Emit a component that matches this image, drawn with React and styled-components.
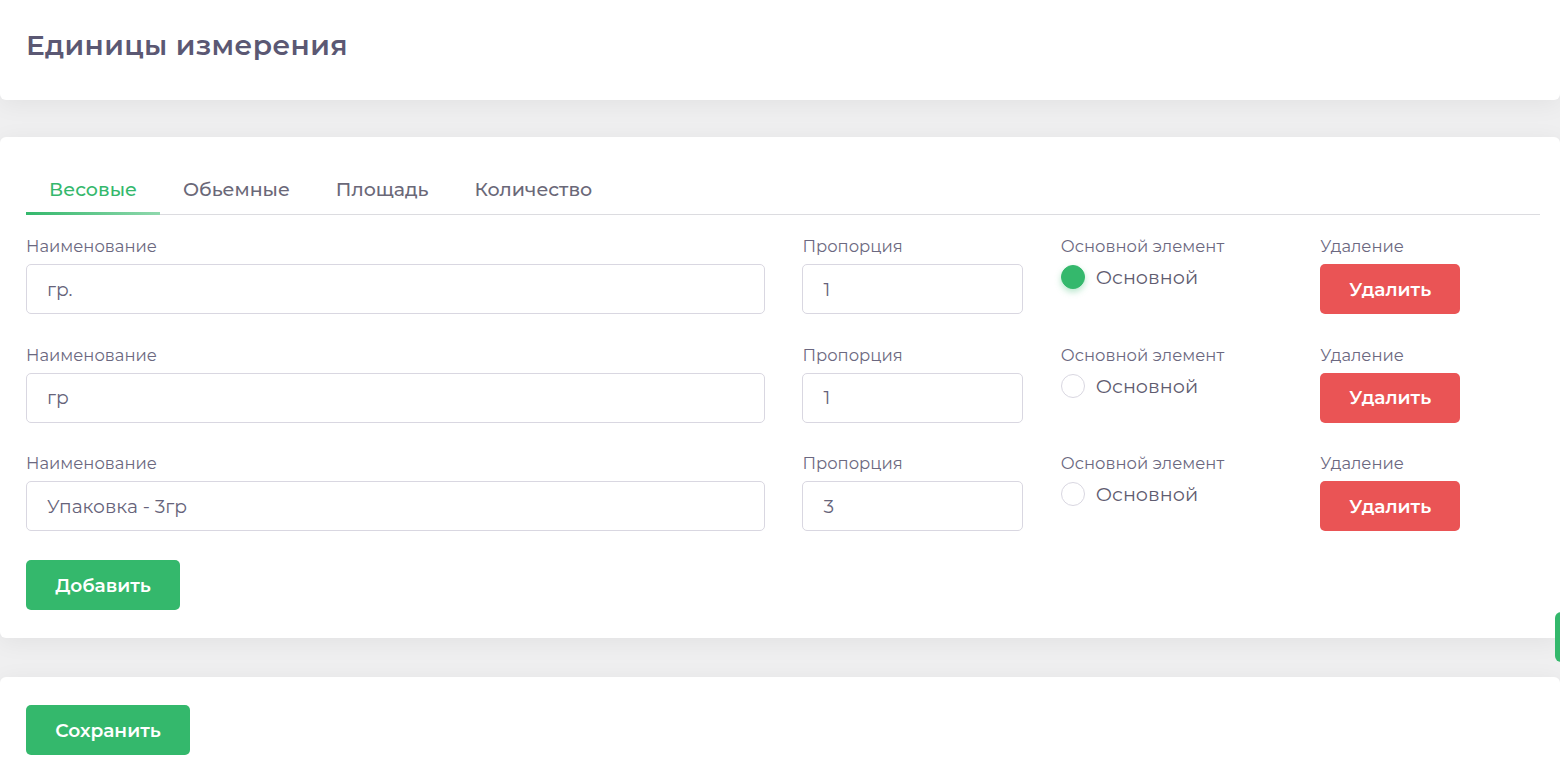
import React, { useState } from 'react';
import styled, { createGlobalStyle } from 'styled-components';

const GlobalStyle = createGlobalStyle`
  html, body {
    margin: 0;
    padding: 0;
    background: #efeff0;
    font-family: Montserrat, "Noto Sans", "Open Sans", sans-serif;
    overflow: hidden;
  }
  * { box-sizing: border-box; }
`;

const Page = styled.div`
  display: flex;
  flex-direction: column;
  gap: 37px;
  min-height: 772px;
`;

const Card = styled.section`
  background: #fff;
  border-radius: 6px;
  box-shadow: 0 4px 24px rgba(0, 0, 0, 0.06);
  padding: ${p => p.$pad || '0 20px 0 26px'};
`;

const Header = styled(Card)`
  height: 100px;
  border-radius: 0 0 6px 6px;
  display: flex;
  align-items: center;
  padding-bottom: 10px;
`;

const Title = styled.h1`
  margin: 0;
  font-size: 28px;
  font-weight: 600;
  color: #5b5873;
  letter-spacing: 0.35px;
`;

const Tabs = styled.div`
  display: flex;
  border-bottom: 1px solid #dcdce0;
  margin-top: 40px;
`;

const Tab = styled.button`
  position: relative;
  background: none;
  border: none;
  font-family: inherit;
  font-size: 19px;
  font-weight: 500;
  line-height: 24px;
  padding: 1px 23px 12px;
  color: ${p => (p.$active ? '#34b86c' : '#6a6878')};
  cursor: pointer;

  &::after {
    content: '';
    position: absolute;
    left: 0;
    right: 0;
    bottom: -1px;
    height: 3px;
    background: ${p => (p.$active ? 'linear-gradient(90deg, #34b86c, #8fd8ad)' : 'transparent')};
  }
`;

const Rows = styled.div`
  display: flex;
  flex-direction: column;
  gap: 30.5px;
  margin-top: 21px;
`;

const Row = styled.div`
  display: grid;
  grid-template-columns: 739px 221px 222px 140px;
  column-gap: 37.4px;
`;

const Field = styled.div`
  display: flex;
  flex-direction: column;
  gap: 8px;
`;

const Label = styled.label`
  font-size: 16.4px;
  color: #6b6880;
  line-height: 20px;
  white-space: nowrap;
`;

const Input = styled.input`
  height: 50px;
  border: 1px solid #d9d7e1;
  border-radius: 5px;
  padding: 0 20px;
  font-family: inherit;
  font-size: 18.7px;
  color: #66637a;
  outline: none;
  width: 100%;
`;

const RadioLine = styled.label`
  display: flex;
  align-items: center;
  gap: 11px;
  font-size: 19.2px;
  color: #5f5c70;
  height: 26px;
  cursor: pointer;
`;

const RadioDot = styled.span`
  width: 24px;
  height: 24px;
  border-radius: 50%;
  flex-shrink: 0;
  background: ${p => (p.$checked ? '#34b86c' : '#fff')};
  border: 1px solid ${p => (p.$checked ? '#34b86c' : '#d9d7e1')};
  box-shadow: ${p => (p.$checked ? '0 3px 6px rgba(52, 184, 108, 0.35)' : 'none')};
`;

const Button = styled.button`
  height: 50px;
  width: ${p => p.$w || 'auto'};
  border: none;
  border-radius: 5px;
  background: ${p => (p.$danger ? '#ea5455' : '#34b86c')};
  color: #fff;
  font-family: inherit;
  font-size: 18.6px;
  font-weight: 600;
  cursor: pointer;
`;

const AddWrap = styled.div`
  margin-top: 29px;
  padding-bottom: 28px;
`;

const Footer = styled(Card)`
  margin-top: 2px;
  padding: 28px 26px 40px;
`;

const SideTab = styled.div`
  position: fixed;
  right: -10px;
  top: 612px;
  width: 15px;
  height: 50px;
  border-radius: 6px;
  background: #34b86c;
`;

const tabs = ['Весовые', 'Обьемные', 'Площадь', 'Количество'];

const initialUnits = [
  { name: 'гр.', ratio: '1' },
  { name: 'гр', ratio: '1' },
  { name: 'Упаковка - 3гр', ratio: '3' },
];

export default function App() {
  const [active, setActive] = useState(0);
  const [main, setMain] = useState(0);
  const [units, setUnits] = useState(initialUnits);

  const update = (i, key, value) =>
    setUnits(units.map((u, j) => (j === i ? { ...u, [key]: value } : u)));

  return (
    <>
      <GlobalStyle />
      <Page>
        <Header>
          <Title>Единицы измерения</Title>
        </Header>

        <Card>
          <Tabs>
            {tabs.map((t, i) => (
              <Tab key={t} $active={i === active} onClick={() => setActive(i)}>
                {t}
              </Tab>
            ))}
          </Tabs>

          <Rows>
            {units.map((u, i) => (
              <Row key={i}>
                <Field>
                  <Label>Наименование</Label>
                  <Input value={u.name} onChange={e => update(i, 'name', e.target.value)} />
                </Field>
                <Field>
                  <Label>Пропорция</Label>
                  <Input value={u.ratio} onChange={e => update(i, 'ratio', e.target.value)} />
                </Field>
                <Field>
                  <Label>Основной элемент</Label>
                  <RadioLine onClick={() => setMain(i)}>
                    <RadioDot $checked={main === i} />
                    Основной
                  </RadioLine>
                </Field>
                <Field>
                  <Label>Удаление</Label>
                  <Button $danger $w="140px" onClick={() => setUnits(units.filter((_, j) => j !== i))}>
                    Удалить
                  </Button>
                </Field>
              </Row>
            ))}
          </Rows>

          <AddWrap>
            <Button $w="154px" onClick={() => setUnits([...units, { name: '', ratio: '' }])}>
              Добавить
            </Button>
          </AddWrap>
        </Card>

        <Footer>
          <Button $w="164px">Сохранить</Button>
        </Footer>
      </Page>
      <SideTab />
    </>
  );
}
